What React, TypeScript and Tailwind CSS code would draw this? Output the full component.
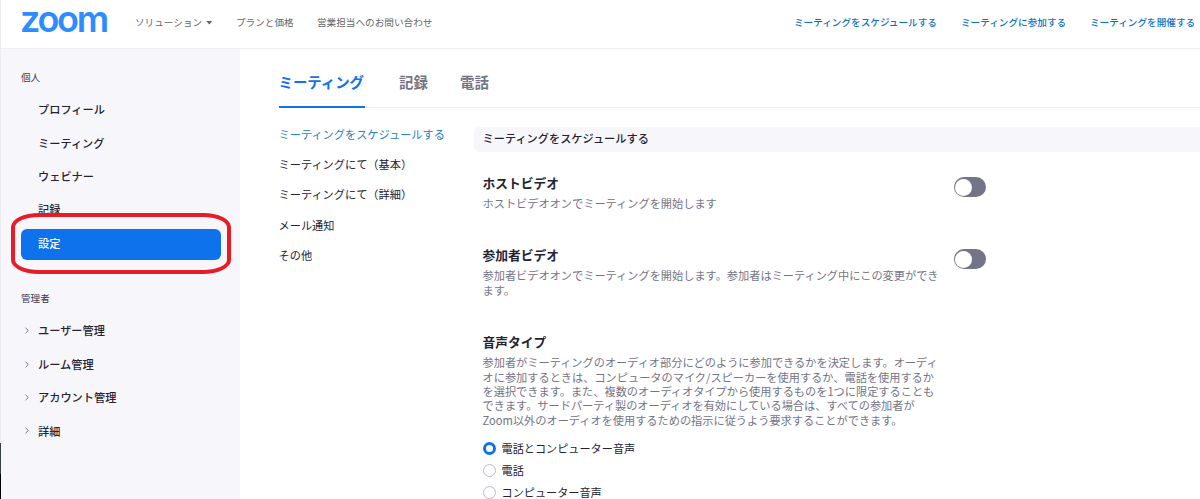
import React from "react";

const personal = ["プロフィール", "ミーティング", "ウェビナー", "記録"];
const admin = ["ユーザー管理", "ルーム管理", "アカウント管理", "詳細"];
const sections = ["ミーティングにて（基本）", "ミーティングにて（詳細）", "メール通知", "その他"];
const audio = ["電話とコンピューター音声", "電話", "コンピューター音声"];

function Logo() {
  return (
    <span className="w-[90px] shrink-0 font-['Inter',sans-serif] text-[36px] leading-[38px] font-semibold tracking-[-2.3px] text-[#2d8cff]">
      zoom
    </span>
  );
}

function Header() {
  return (
    <header className="flex h-[49px] shrink-0 items-start border-b border-[#ededf2] bg-white pl-[19px] whitespace-nowrap">
      <Logo />
      <nav className="ml-[25px] flex h-[44px] items-center text-[9.65px] text-[#666]">
        <span className="flex w-[101px] items-center">
          ソリューション
          <svg width="7" height="4" viewBox="0 0 7 4" className="mt-[2px] ml-[4px] fill-[#666]">
            <path d="M0.3 0h6L3.3 3.6z" />
          </svg>
        </span>
        <span className="w-[81px]">プランと価格</span>
        <span>営業担当へのお問い合わせ</span>
      </nav>
      <nav className="ml-auto flex h-[44px] w-[406px] shrink-0 items-center text-[9.62px] font-medium text-[#0e71c8]">
        <span className="w-[167px] shrink-0">ミーティングをスケジュールする</span>
        <span className="w-[129px] shrink-0">ミーティングに参加する</span>
        <span className="shrink-0">ミーティングを開催する</span>
      </nav>
    </header>
  );
}

function Sidebar() {
  return (
    <aside className="relative w-[239px] shrink-0 bg-[#f7f7fb] pt-[19px] pl-[20px] text-[11.2px] font-medium text-[#232333]">
      <div className="h-[25px] text-[9.6px] leading-[18px] font-normal text-[#39394d]">個人</div>
      <ul>
        {personal.map((t) => (
          <li key={t} className="flex h-[33.4px] items-center pl-[17px]">
            {t}
          </li>
        ))}
      </ul>
      <div className="mt-[2px] flex h-[31px] w-[200px] items-center rounded-[6px] bg-[#0e72ed] pb-px pl-[17px] text-white">
        設定
      </div>
      <div className="mt-[29px] h-[25.5px] text-[9.6px] leading-[18px] font-normal text-[#39394d]">管理者</div>
      <ul>
        {admin.map((t) => (
          <li key={t} className="flex h-[33.4px] items-center">
            <svg width="17" height="7" viewBox="0 0 17 7" className="fill-none stroke-[#747487]">
              <path d="M4.5 0.8L7.3 3.5L4.5 6.2" />
            </svg>
            {t}
          </li>
        ))}
      </ul>
      <div className="pointer-events-none absolute top-[164px] left-[10px] h-[61px] w-[220px] rounded-[28px/14px] border-4 border-[#e81c24]" />
    </aside>
  );
}

function Toggle() {
  return (
    <span className="mt-[4px] ml-auto flex h-[20px] w-[32px] shrink-0 items-center rounded-full bg-[#747487] pl-[1.5px]">
      <span className="h-[17px] w-[17px] rounded-full bg-white" />
    </span>
  );
}

function Setting({ title, toggle, children }: { title: string; toggle?: boolean; children: React.ReactNode }) {
  return (
    <section className="flex w-[503px] items-start">
      <div className="w-[470px] whitespace-nowrap">
        <h3 className="text-[12.75px] leading-[20px] font-bold text-[#232333]">{title}</h3>
        <p className="mt-[3px] mb-px text-[11.19px] leading-[14.4px] text-[#747487]">{children}</p>
      </div>
      {toggle && <Toggle />}
    </section>
  );
}

export default function App() {
  return (
    <div className="flex h-[499px] w-[1200px] overflow-hidden bg-white font-['Noto_Sans_CJK_JP',sans-serif]">
      <div className="flex w-px shrink-0 flex-col bg-[#ececf0] pt-[443px]">
        <div className="h-[31px] bg-[#37413f]" />
        <div className="h-[25px] bg-black" />
      </div>
      <div className="flex min-w-0 grow flex-col">
        <Header />
        <div className="flex min-h-0 grow">
          <Sidebar />
          <main className="min-w-0 grow pl-[38.5px]">
            <div className="flex h-[59px] items-end border-b border-[#ededf2] text-[14.4px] font-bold text-[#747487]">
              <div className="-mb-px h-[38px] w-[86.5px] border-b-2 border-[#0e72ed] leading-[24px] text-[#0e72ed]">
                ミーティング
              </div>
              <div className="ml-[34px] h-[37px] w-[61px] leading-[24px]">記録</div>
              <div className="h-[37px] leading-[24px]">電話</div>
            </div>
            <div className="flex">
              <ul className="w-[195px] shrink-0 pt-[11px] text-[11.19px] text-[#232333]">
                <li className="flex h-[30.3px] items-center text-[#2681c9]">ミーティングをスケジュールする</li>
                {sections.map((t) => (
                  <li key={t} className="flex h-[30.3px] items-center">
                    {t}
                  </li>
                ))}
              </ul>
              <div className="min-w-0 grow pt-[19px]">
                <h2 className="flex h-[25px] items-center rounded-l-[5px] bg-[#f7f7fb] pb-[2px] pl-[9px] text-[11.19px] font-medium text-[#232333]">
                  ミーティングをスケジュールする
                </h2>
                <div className="pt-[21px] pl-[9px]">
                  <Setting title="ホストビデオ" toggle>
                    ホストビデオオンでミーティングを開始します
                  </Setting>
                  <div className="h-[34px]" />
                  <Setting title="参加者ビデオ" toggle>
                    参加者ビデオオンでミーティングを開始します。参加者はミーティング中にこの変更ができ
                    <br />
                    ます。
                  </Setting>
                  <div className="h-[34px]" />
                  <Setting title="音声タイプ">
                    参加者がミーティングのオーディオ部分にどのように参加できるかを決定します。オーディ
                    <br />
                    オに参加するときは、コンピュータのマイク/スピーカーを使用するか、電話を使用するか
                    <br />
                    を選択できます。また、複数のオーディオタイプから使用するものを1つに限定することも
                    <br />
                    できます。サードパーティ製のオーディオを有効にしている場合は、すべての参加者が
                    <br />
                    Zoom以外のオーディオを使用するための指示に従うよう要求することができます。
                  </Setting>
                  <div className="mt-[9px] text-[11.15px] text-[#232333]">
                    {audio.map((t, i) => (
                      <label key={t} className="flex h-[22.2px] items-center">
                        <span
                          className={
                            i === 0
                              ? "mr-[6px] h-[13px] w-[13px] rounded-full border-[3.5px] border-[#0e72ed] bg-white"
                              : "mr-[6px] h-[13px] w-[13px] rounded-full border border-[#babacc] bg-white"
                          }
                        />
                        {t}
                      </label>
                    ))}
                  </div>
                </div>
              </div>
            </div>
          </main>
        </div>
      </div>
    </div>
  );
}
